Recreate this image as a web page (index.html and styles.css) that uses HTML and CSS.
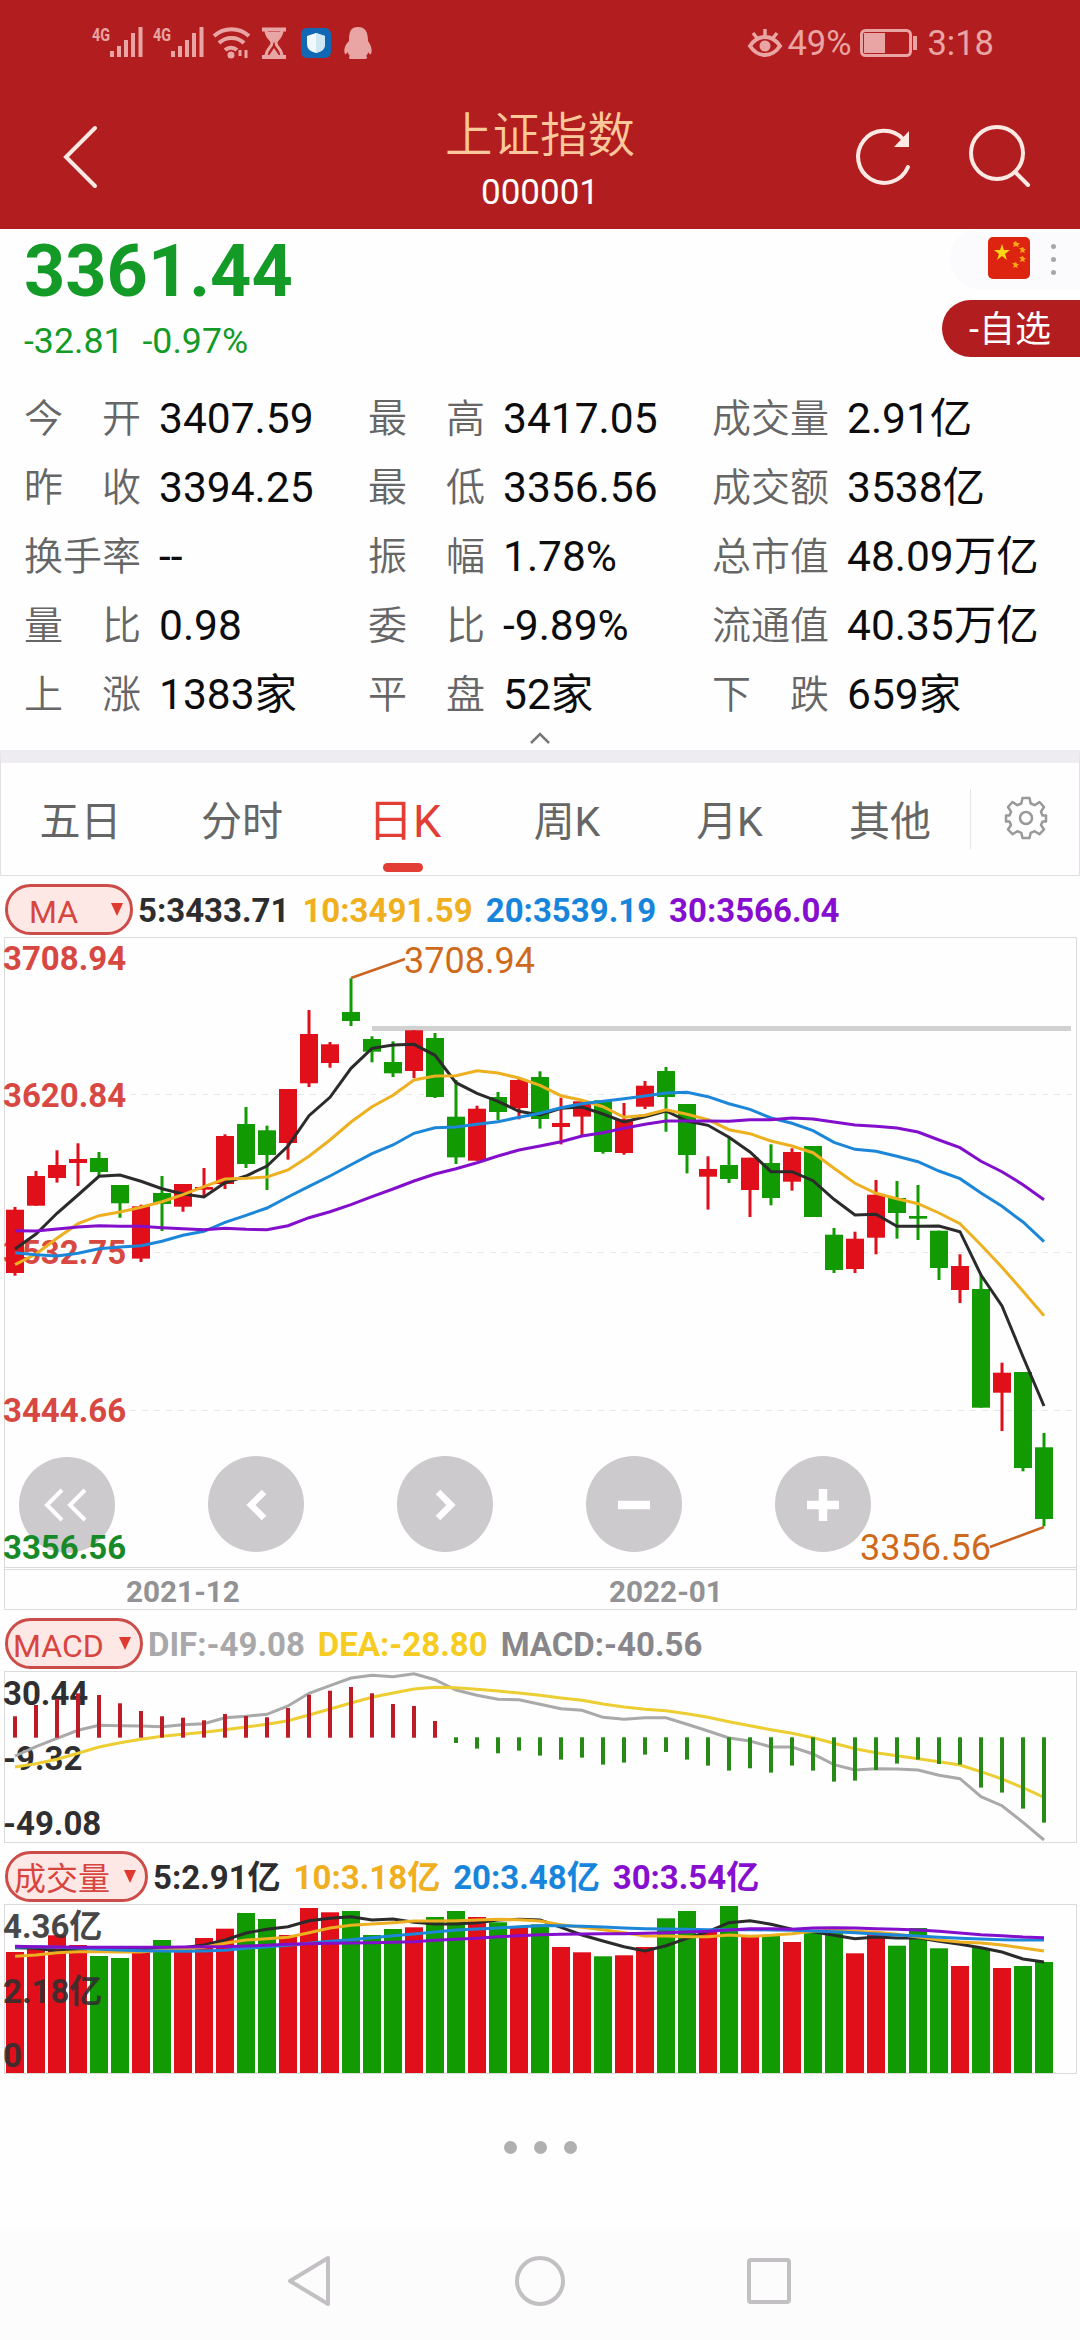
FILE: index.html
```
<!DOCTYPE html>
<html lang="zh-CN">
<head>
    <meta charset="UTF-8">
    <meta name="viewport" content="width=device-width, initial-scale=1.0">
    <title>上证指数 000001</title>
    <link rel="stylesheet" href="styles.css">
</head>
<body>
    <div class="top">
        <div class="status">
            <svg class="status-left" viewBox="90 20 290 44" width="290" height="44">
                <g id="signal">
                    <text x="92" y="41" class="net" textLength="18" lengthAdjust="spacingAndGlyphs">4G</text>
                    <path d="M112 51v6M119 46v11M126 40v17M133 33v24M140.5 27v30" stroke-width="4"/>
                </g>
                <use href="#signal" x="61"/>
                <g fill="none" stroke-width="4">
                    <path d="M214 36a26 26 0 0 1 35 0M219 43a18 18 0 0 1 25 0M225 50a9 9 0 0 1 12 0"/>
                    <path d="M240 50v6M246 50v8" stroke-width="3"/>
                </g>
                <circle class="f" cx="231" cy="55" r="3.5"/>
                <path d="M262 29.500h24M262 57h24" stroke-width="4"/>
                <path d="M266 30c0 8 6 9 6 13s-6 6-6 13M282 30c0 8-6 9-6 13s6 6 6 13" fill="none" stroke-width="3"/>
                <path class="f" d="M267 32h14c-1 6-5 8-7 11c-2-3-6-5-7-11zM268 57l6-9 6 9z"/>
                <rect x="301" y="28" width="30" height="30" rx="6" fill="#1268b4"/>
                <path d="M316 33l9 3v8c0 6-5 8-9 9c-4-1-9-3-9-9v-8z" fill="#eef8fd"/>
                <path d="M316 33l9 3v8c0 6-5 8-9 9z" fill="#cfe6f3"/>
                <path class="f" d="M358 27c8 0 10 6 10 14c2 3 5 8 3 13c-1 1-2-1-3-2c0 2-1 3-2 4c2 1 1 3-1 3h-14c-2 0-3-2-1-3c-1-1-2-2-2-4c-1 1-3 3-3 2c-2-5 1-10 4-13c0-8 1-14 9-14z"/>
            </svg>
            <div class="status-right">
                <svg viewBox="0 0 36 32" width="36" height="32">
                    <path d="M3 19c8-12 22-12 30 0c-8 12-22 12-30 0z" fill="none" stroke-width="4"/>
                    <circle class="f" cx="18" cy="19" r="5.500"/>
                    <path d="M18 2v7M6 6l4 5M30 6l-4 5" stroke-width="3.500"/>
                </svg>
                <span class="pct">49%</span>
                <svg class="battery" viewBox="0 0 58 30" width="58" height="30">
                    <rect x="1.500" y="2.500" width="49" height="25" rx="4" fill="none" stroke-width="3"/>
                    <rect class="f" x="4" y="5" width="21" height="20"/>
                    <path d="M55 8v14" stroke-width="4"/>
                </svg>
                <span>3:18</span>
            </div>
        </div>
        <div class="header">
            <svg class="back" viewBox="0 0 40 64" width="40" height="64"><path d="M35 3L6 32l29 29"/></svg>
            <div class="title">
                <h1>上证指数</h1>
                <p>000001</p>
            </div>
            <div class="tools">
                <svg viewBox="2 0 64 64" width="64" height="64">
                    <path d="M56 43A26 26 0 1 1 51 15"/>
                    <path d="M57 7v16H42z" fill="#fde9e4" stroke="none"/>
                </svg>
                <svg viewBox="0 0 64 64" width="64" height="64">
                    <circle cx="29" cy="29" r="26"/>
                    <path d="M47 48l13 13"/>
                </svg>
            </div>
        </div>
    </div>

    <div class="quote">
        <div class="price">3361.44</div>
        <div class="change"><span>-32.81</span><span>-0.97%</span></div>
        <div class="market">
            <svg viewBox="0 0 42 42" width="42" height="42">
                <rect width="42" height="42" rx="5" fill="#dc2410"/>
                <path d="M14 7l2 6h6l-5 4 2 6-5-4-5 4 2-6-5-4h6z" fill="#fbd615"/>
                <path d="M28 4l1 2 3 0-2 2 1 2-3-1-3 1 1-2-1-2zM35 10l1 2h2l-2 2 1 2-3-1-2 1 1-3-2-2h2zM35 19l1 2h2l-2 2 1 2-3-1-2 1 1-3-2-2h2zM28 25l1 2h2l-2 2 1 2-3-1-2 1 1-3-2-2h2z" fill="#f5a516"/>
            </svg>
            <div class="more"><i></i><i></i><i></i></div>
        </div>
        <div class="fav">-自选</div>

        <div class="stats">
            <div><b>今 开</b><span>3407.59</span></div>
            <div><b>最 高</b><span>3417.05</span></div>
            <div><b>成交量</b><span>2.91亿</span></div>
            <div><b>昨 收</b><span>3394.25</span></div>
            <div><b>最 低</b><span>3356.56</span></div>
            <div><b>成交额</b><span>3538亿</span></div>
            <div><b>换手率</b><span>--</span></div>
            <div><b>振 幅</b><span>1.78%</span></div>
            <div><b>总市值</b><span>48.09万亿</span></div>
            <div><b>量 比</b><span>0.98</span></div>
            <div><b>委 比</b><span>-9.89%</span></div>
            <div><b>流通值</b><span>40.35万亿</span></div>
            <div><b>上 涨</b><span>1383家</span></div>
            <div><b>平 盘</b><span>52家</span></div>
            <div><b>下 跌</b><span>659家</span></div>
        </div>
        <svg class="fold" viewBox="0 0 22 14" width="22" height="14"><path d="M2 12l9-9 9 9"/></svg>
    </div>

    <div class="tabs">
        <div class="tab">五日</div>
        <div class="tab">分时</div>
        <div class="tab active">日K</div>
        <div class="tab">周K</div>
        <div class="tab">月K</div>
        <div class="tab">其他</div>
        <div class="gear">
            <svg viewBox="0 0 44 44" width="44" height="44">
                <path d="M18.500 2h7l1.200 5.500 4 1.700L35.500 6l4.500 5-3 4.700 1.500 3.800H42v6h-3.500L37 29l3 4.500-4.500 4.700-4.800-3-4 1.600L25.500 42h-7l-1.200-5.200-4-1.600-4.800 3L4 33.500 7 29l-1.500-3.500H2v-6h3.500L7 15.700 4 11l4.500-5 4.800 3.200 4-1.700z"/>
                <circle cx="22" cy="22" r="6"/>
            </svg>
        </div>
    </div>

    <div class="legend">
        <div class="pill ma"><span>MA</span><i></i></div>
        <span class="c5">5:3433.71</span>
        <span class="c10">10:3491.59</span>
        <span class="c20">20:3539.19</span>
        <span class="c30">30:3566.04</span>
    </div>
    <svg class="chart" viewBox="0 937 1080 673" width="1080" height="673">
        <path class="frame" d="M4.500 1569V937.500h1072V1609.500H4.500zM4 1567.500h1072M4 1569.500h1072"/>
        <path class="grid" d="M130 1094.500h942M130 1252.500h942M130 1410.500h942"/>
        <g class="axis up">
            <text x="3" y="970">3708.94</text>
            <text x="3" y="1107">3620.84</text>
            <text x="3" y="1264">3532.75</text>
            <text x="3" y="1422">3444.66</text>
        </g>
        <path d="M372 1028.500h699" stroke="#d2d1d1" stroke-width="5"/>
        <g id="candles"></g>
        <g id="kLines" class="lines"></g>
        <g class="btns">
            <circle cx="67" cy="1505" r="48"/>
            <circle cx="256" cy="1504" r="48"/>
            <circle cx="445" cy="1504" r="48"/>
            <circle cx="634" cy="1504" r="48"/>
            <circle cx="823" cy="1504" r="48"/>
            <path d="M62 1490l-15 15 15 15M85 1490l-15 15 15 15" stroke-width="4"/>
            <path d="M264 1492l-13 13 13 13M438 1492l13 13-13 13" stroke-width="6.500"/>
            <path d="M618 1505h32M807 1505h32M823 1489v32" stroke-width="8.500"/>
        </g>
        <text class="axis down" x="3" y="1559">3356.56</text>
        <g class="peak">
            <path d="M351 978l54-19M990 1547l54-20"/>
            <text x="404" y="973">3708.94</text>
            <text x="860" y="1560">3356.56</text>
        </g>
        <g class="date">
            <text x="126" y="1602">2021-12</text>
            <text x="609" y="1602">2022-01</text>
        </g>
    </svg>

    <div class="legend">
        <div class="pill macd"><span>MACD</span><i></i></div>
        <span class="dif">DIF:-49.08</span>
        <span class="dea">DEA:-28.80</span>
        <span class="hist">MACD:-40.56</span>
    </div>
    <svg class="chart" viewBox="0 1671 1080 172" width="1080" height="172">
        <rect class="frame" x="4.500" y="1671.500" width="1072" height="171"/>
        <g class="axis">
            <text x="3" y="1705">30.44</text>
            <text x="3" y="1770">-9.32</text>
            <text x="3" y="1835">-49.08</text>
        </g>
        <g id="macdLines" class="lines"></g>
        <g id="macdBars"></g>
    </svg>

    <div class="legend">
        <div class="pill"><span>成交量</span><i></i></div>
        <span class="c5">5:2.91亿</span>
        <span class="c10">10:3.18亿</span>
        <span class="c20">20:3.48亿</span>
        <span class="c30">30:3.54亿</span>
    </div>
    <svg class="chart" viewBox="0 1904 1080 170" width="1080" height="170">
        <rect class="frame" x="4.500" y="1904.500" width="1072" height="169"/>
        <g id="volBars"></g>
        <g id="volLines" class="lines"></g>
        <g class="axis over">
            <text x="3" y="1938">4.36亿</text>
            <text x="3" y="2003">2.18亿</text>
            <text x="3" y="2067">0</text>
        </g>
    </svg>

    <div class="dots"><i></i><i></i><i></i></div>

    <div class="nav">
        <svg viewBox="280 2250 520 62" width="520" height="62">
            <path d="M328 2258v46L290 2281z"/>
            <circle cx="540" cy="2281" r="23"/>
            <rect x="749" y="2260" width="40" height="42" rx="2"/>
        </svg>
    </div>

    <script>
        // high, body top, body bottom, low (thirds of a pixel), colour
        const candles = [
            [831,839,1029,1037,'r'],[723,738,827,827,'r'],[661,705,744,758,'r'],[640,687,699,768,'r'],[666,684,726,740,'g'],
            [765,765,820,863,'g'],[824,829,986,996,'r'],[738,789,822,903,'g'],[762,762,830,845,'r'],[714,771,779,800,'r'],
            [613,618,762,777,'r'],[531,582,702,714,'g'],[587,601,675,780,'g'],[477,477,639,689,'r'],[240,312,460,471,'r'],
            [336,343,399,413,'r'],[145,246,273,288,'g'],[319,327,365,397,'g'],[334,396,430,441,'g'],[301,301,423,444,'r'],
            [309,324,501,504,'g'],[450,560,682,702,'g'],[527,536,692,692,'r'],[486,501,546,571,'g'],[444,450,534,568,'r'],
            [424,441,567,596,'g'],[503,579,591,643,'r'],[512,514,560,619,'r'],[510,511,666,671,'g'],[519,568,669,674,'r'],
            [453,467,530,537,'r'],[411,423,501,605,'g'],[522,522,675,730,'g'],[679,717,740,839,'r'],[620,705,747,759,'g'],
            [683,683,780,861,'r'],[643,699,804,826,'g'],[655,666,755,782,'r'],[648,648,861,861,'g'],[894,914,1020,1029,'g'],
            [905,926,1017,1029,'r'],[750,794,923,973,'r'],[753,804,849,926,'g'],[765,858,866,930,'g'],[902,902,1014,1050,'g'],
            [973,1008,1080,1119,'r'],[1035,1077,1433,1433,'g'],[1298,1328,1388,1503,'r'],[1326,1326,1614,1624,'g'],[1509,1552,1767,1789,'g']
        ]
        const ma5 = [957,912,850,795,739,735,754,776,792,801,758,738,708,648,557,502,415,355,345,343,376,458,490,514,544,555,535,531,552,576,560,543,573,586,622,666,725,725,752,808,855,853,889,889,888,905,1035,1128,1280,1428]
        const ma10 = [1004,972,925,881,857,846,832,815,794,770,747,745,741,720,679,630,576,530,496,450,438,437,422,429,444,466,497,511,530,562,556,539,553,569,599,611,633,648,668,715,760,790,806,821,849,881,945,1012,1084,1157]
        const ma20 = [968,974,978,970,956,951,947,934,916,904,877,856,834,801,769,738,704,671,645,610,593,591,583,575,562,550,533,521,514,506,498,489,487,500,521,538,564,580,602,637,658,664,679,695,723,746,789,829,876,935]
        const ma30 = [902,903,897,891,887,889,889,893,896,899,895,898,899,887,863,845,824,800,777,753,732,716,698,678,660,648,635,618,608,595,583,573,573,573,574,569,569,564,567,576,585,589,594,606,630,653,694,725,764,809]

        const macd = [319,285,267,250,255,280,303,319,323,331,312,318,322,294,254,242,231,250,282,288,333,399,416,430,422,437,449,443,464,458,434,426,449,467,482,475,488,467,482,515,512,480,461,449,462,464,533,548,596,638]
        const dif = [438,410,385,361,346,347,348,350,344,341,323,319,313,288,250,227,204,196,200,191,209,240,256,268,269,283,296,301,322,328,323,323,343,363,384,393,411,411,432,464,480,476,477,480,496,506,560,587,637,690]
        const dea = [471,461,448,430,411,398,388,379,373,367,359,351,343,332,315,297,279,262,249,237,232,233,238,243,249,256,264,271,282,291,298,302,311,322,335,347,359,370,383,400,416,428,437,446,455,465,485,507,533,562]

        const vol = [336,324,286,315,348,354,336,300,322,294,266,219,237,285,204,217,213,285,267,262,231,213,231,247,259,253,321,337,349,346,321,235,213,270,198,288,288,306,275,278,340,276,317,264,325,378,324,384,378,366]
        const vol5 = [323,325,333,328,325,325,329,325,323,315,300,279,268,260,242,235,230,240,237,247,252,252,248,240,238,240,262,285,303,320,333,317,295,275,248,242,253,268,275,286,296,291,294,293,304,313,323,336,357,366]
        const vol10 = [349,345,338,335,335,336,336,330,328,322,310,300,296,292,278,264,256,252,248,243,243,242,240,238,239,243,254,262,269,278,288,288,290,290,285,289,286,281,274,270,274,277,283,291,300,306,309,315,324,333]
        const vol20 = [322,320,322,324,328,330,332,333,334,333,331,325,320,316,310,304,299,293,287,282,276,270,267,264,260,257,257,259,261,264,266,267,268,269,269,269,270,271,273,275,278,282,285,288,292,295,297,299,300,300]
        const vol30 = [319,320,321,322,322,322,322,322,321,320,320,318,316,313,311,310,309,308,307,305,301,298,295,290,287,284,283,282,281,281,280,278,276,274,270,266,266,268,264,263,264,266,268,270,274,279,284,287,291,293]

        const x = i => 15 + i * 21
        const y = (base, v) => (base + v / 3).toFixed(1)
        const bar = (i, w, base, from, to, cls) =>
            `<rect class="${cls}" x="${x(i) - w / 2}" y="${y(base, from)}" width="${w}" height="${((to - from) / 3).toFixed(1)}"/>`
        const line = (base, data, cls) =>
            `<polyline class="${cls}" points="${data.map((v, i) => x(i) + ',' + y(base, v)).join(' ')}"/>`
        const put = (id, html) => document.getElementById(id).innerHTML = html

        put('candles', candles.map((c, i) => bar(i, 3, 930, c[0], c[3], c[4]) + bar(i, 18, 930, c[1], c[2], c[4])).join(''))
        put('kLines', line(930, ma5, 's5') + line(930, ma10, 's10') + line(930, ma20, 's20') + line(930, ma30, 's30'))

        put('macdLines', line(1610, dif, 'sdif') + line(1610, dea, 'sdea'))
        put('macdBars', macd.map((v, i) => v < 383 ? bar(i, 4, 1610, v, 383, 'mr') : bar(i, 4, 1610, 382, v, 'mg')).join(''))

        put('volBars', vol.map((v, i) => bar(i, 18, 1840, v, 699, candles[i][4])).join(''))
        put('volLines', line(1840, vol5, 's5') + line(1840, vol10, 's10') + line(1840, vol20, 's20') + line(1840, vol30, 's30'))
    </script>
</body>
</html>
```
FILE: styles.css
```
*{
    margin: 0;
    padding: 0;
    box-sizing: border-box;
}

body{
    width: 1080px;
    height: 2340px;
    background: #fefefe;
    font-family: Roboto, "Noto Sans CJK SC", sans-serif;
    overflow: hidden;
}
svg{
    display: block;
}

/* red top */
.top{
    height: 229px;
    background: #b21e1f;
}
.status{
    height: 88px;
    padding: 20px 86px 0 90px;
    display: flex;
    justify-content: space-between;
    color: #e9a5a3;
}
.status svg{
    stroke: #e9a5a3;
}
.status .f,
.status .net{
    fill: #e9a5a3;
    stroke: none;
}
.status rect[rx="6"],
.status path[fill^="#"]{
    stroke: none;
}
.net{
    font-size: 18px;
    font-weight: 700;
}
.status-right{
    height: 46px;
    display: flex;
    align-items: center;
    font-size: 34.5px;
}
.pct{
    margin-left: 4px;
}
.battery{
    margin: 0 9px 0 9px;
}
.header{
    height: 141px;
    padding: 0 48px 0 60px;
    display: grid;
    grid-template-columns: 178px 1fr 190px;
    align-items: start;
}
.header svg{
    fill: none;
    stroke: #fde9e4;
    stroke-width: 4;
    stroke-linecap: round;
}
.back{
    margin-top: 37px;
}
.title{
    text-align: center;
    padding-top: 13px;
}
.title h1{
    font-size: 47.5px;
    line-height: 70px;
    font-weight: 350;
    color: #fbc89c;
}
.title p{
    font-size: 35px;
    line-height: 44px;
    color: #fff;
}
.tools{
    display: flex;
    justify-content: space-between;
    padding: 36px 0 0 12px;
}

/* quote */
.quote{
    position: relative;
    height: 521px;
    padding-left: 24px;
}
.price{
    padding-top: 2px;
    font-size: 72px;
    line-height: 82px;
    font-weight: 700;
    color: #149a27;
}
.change{
    display: flex;
    gap: 19px;
    height: 70px;
    padding-top: 7px;
    font-size: 35.7px;
    line-height: 42px;
    color: #149a27;
}
.market{
    position: absolute;
    top: 0;
    right: 0;
    width: 130px;
    height: 60px;
    padding: 8px 24px 0 38px;
    display: flex;
    justify-content: space-between;
    background: #fbfafc;
    border-radius: 30px 0 0 30px;
}
.more{
    display: flex;
    flex-direction: column;
    gap: 8px;
    padding-top: 7px;
}
.more i{
    width: 5px;
    height: 5px;
    border-radius: 50%;
    background: #a8a6a8;
}
.fav{
    position: absolute;
    top: 71px;
    right: 0;
    width: 138px;
    height: 57px;
    padding-left: 27px;
    border-radius: 29px 0 0 29px;
    background: #b21e1f;
    color: #fff;
    font-size: 36px;
    line-height: 61px;
}
.stats{
    display: grid;
    grid-template-columns: 344px 344px 1fr;
    grid-auto-rows: 69px;
    padding-top: 1px;
}
.stats div{
    display: flex;
    align-items: center;
    gap: 18px;
    font-size: 42.5px;
    line-height: 69px;
    color: #0c0c0c;
    white-space: nowrap;
}
.stats b{
    width: 117px;
    padding-top: 2px;
    font-size: 39px;
    font-weight: 350;
    color: #666;
    text-align-last: justify;
}
.fold{
    margin: 2px 0 0 505px;
    fill: none;
    stroke: #777;
    stroke-width: 2.5;
}

/* tabs */
.tabs{
    height: 126px;
    border: 1px solid #e2e0e2;
    border-top: 13px solid #eeecf0;
    display: grid;
    grid-template-columns: 159px 164px 161px 164px 161px 160px 1fr;
    align-items: center;
}
.tab{
    position: relative;
    height: 112px;
    line-height: 118px;
    text-align: center;
    font-size: 41px;
    color: #666;
}
.tab.active{
    font-size: 45px;
    color: #e23e35;
}
.tab.active::after{
    content: '';
    position: absolute;
    left: 59px;
    bottom: 3px;
    width: 40px;
    height: 9px;
    border-radius: 5px;
    background: #e23e35;
}
.gear{
    height: 60px;
    border-left: 1px solid #e6e4e6;
    padding: 7px 0 0 33px;
}
.gear svg{
    fill: none;
    stroke: #999;
    stroke-width: 2.5;
    stroke-linejoin: round;
}

/* indicator rows */
.legend{
    height: 61px;
    padding: 8px 0 3px 5px;
    display: flex;
    align-items: center;
    font-size: 33px;
    font-weight: 700;
    line-height: 50px;
    white-space: nowrap;
}
.legend > span{
    margin-right: 13px;
    padding-top: 4px;
}
.pill{
    flex: none;
    width: 143px;
    height: 51px;
    margin-right: 5px;
    padding: 0 9px 0 6px;
    display: flex;
    align-items: center;
    justify-content: space-between;
    border: 3px solid #cb4c48;
    border-radius: 26px;
    background: #fee8e6;
    color: #d8453f;
    font-size: 32px;
    font-weight: 400;
}
.pill span{
    padding-top: 5px;
}
.pill i{
    border: 6.5px solid transparent;
    border-top: 13px solid #e0392f;
    border-bottom: 0;
}
.pill.ma{
    width: 128px;
    padding: 0 7px 0 21px;
}
.pill.macd{
    width: 138px;
    padding-left: 5px;
}
.c5{ color: #2d2d2f; }
.c10{ color: #f0af1e; }
.c20{ color: #1785dc; }
.c30{ color: #860fcf; }
.dif{ color: #a8a7a9; }
.dea{ color: #f6cc20; }
.hist{ color: #88868a; }

/* charts */
.frame{
    fill: none;
    stroke: #dcdbdc;
}
.grid{
    stroke: #e9e7e9;
    stroke-dasharray: 6 6;
}
.axis{
    font-size: 33px;
    font-weight: 700;
    fill: #2f2f31;
}
.axis.up{ fill: #d84842; }
.axis.down{ fill: #178a28; }
.axis.over{ opacity: .88; }
.r{ fill: #e00f19; }
.g{ fill: #129a03; }
.mr{ fill: #bd1c26; }
.mg{ fill: #278a17; }
.lines{
    fill: none;
    stroke-width: 3;
}
.s5{ stroke: #2b2b2b; }
.s10{ stroke: #edb021; }
.s20{ stroke: #1c86d8; }
.s30{ stroke: #830ecb; }
.sdif{ stroke: #a9a9a9; }
.sdea{ stroke: #edce32; }
.btns circle{
    fill: #cccacd;
}
.btns path{
    fill: none;
    stroke: #fff;
}
.peak{
    font-size: 36px;
    fill: #cf6a1c;
}
.peak path{
    stroke: #cb6420;
    stroke-width: 2.7;
}
.date{
    font-size: 29.7px;
    font-weight: 700;
    fill: #929194;
}

/* bottom */
.dots{
    height: 154px;
    display: flex;
    justify-content: center;
    gap: 17px;
    padding-top: 67px;
}
.dots i{
    width: 13px;
    height: 13px;
    border-radius: 50%;
    background: #b1b0b1;
}
.nav{
    height: 112px;
    padding: 22px 0 0 280px;
    background: #fdfcfd;
}
.nav svg{
    fill: none;
    stroke: #c2c0c2;
    stroke-width: 4;
    stroke-linejoin: round;
}
```
